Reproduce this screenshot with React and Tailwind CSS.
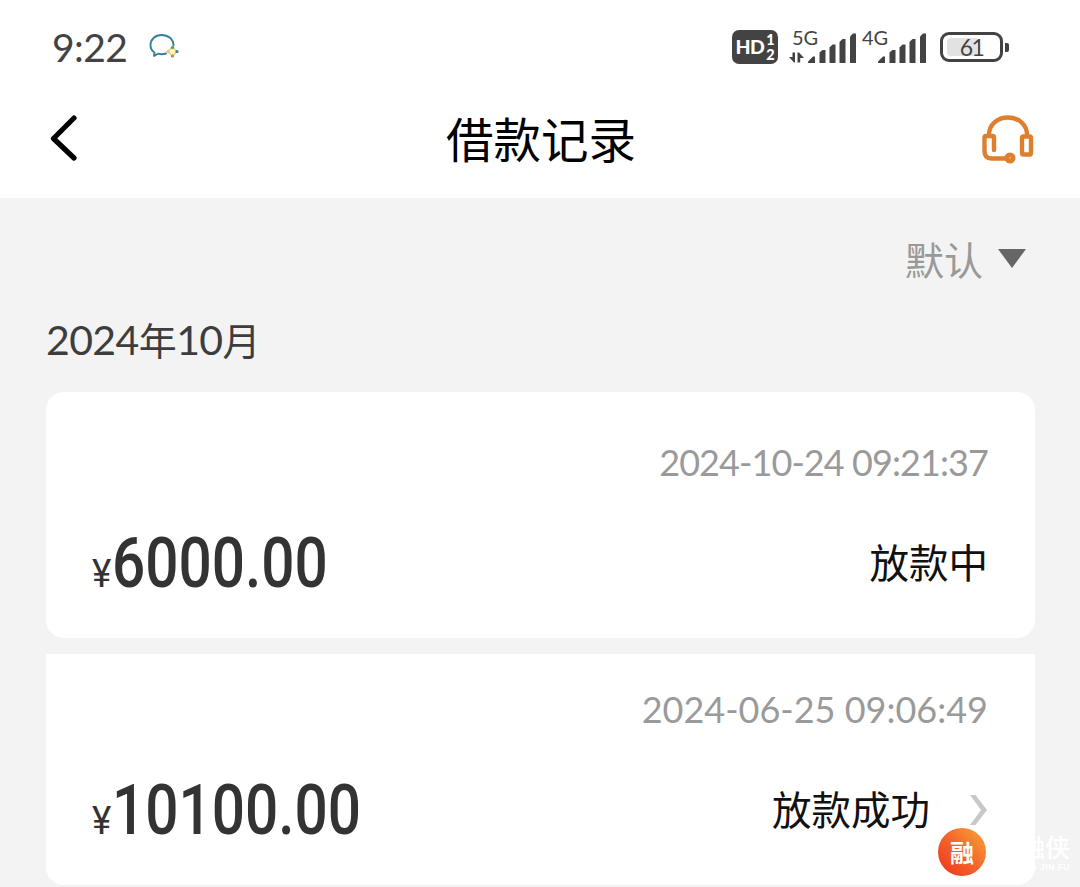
const records = [
  { id: 1, time: '2024-10-24 09:21:37', amount: '6000.00', status: '放款中', hasDetail: false },
  { id: 2, time: '2024-06-25 09:06:49', amount: '10100.00', status: '放款成功', hasDetail: true },
];

const SignalBars = ({ withArrows }) => (
  <svg width="68" height="32" viewBox="0 0 68 32" fill="#434343">
    {withArrows && <path d="M3.500 20.500H6V30.500H5L0 25h3.500zM8.500 30.500V20.500h1.500l5 5.500h-3.800v4.500z" />}
    <path d="M19 31v-1.500l5-5h2V31z" />
    <path d="M30.500 31V20.500l3-2.500h3V31z" />
    <path d="M40.500 31V15.500l3-3h3V31z" />
    <path d="M50.500 31V10l3-3h3v24z" />
    <path d="M61 31V4.500l3-3h3V31z" />
  </svg>
);

const StatusBar = () => (
  <div className="flex h-[94px] items-center justify-between pl-[52px] pr-[71px] text-[#434343]">
    <div className="flex items-center gap-[22px]">
      <span className="w-[75px] whitespace-nowrap font-['Lato'] text-[39px] leading-none tracking-[-0.6px]">9:22</span>
      <svg width="31" height="28" viewBox="0 0 31 28" fill="none" strokeLinecap="round" strokeLinejoin="round">
        <path d="M24.500 12.500C24.500 6 19 2 12.500 2 6 2 1.500 6.500 1.500 12c0 3.500 1.500 6 4 7.500L5 23l4-2.300c3 .8 5.500.6 8-.2" stroke="#37809b" strokeWidth="1.900" />
        <path d="M18.500 18.500l5-4.500 4.500 4.500-4.500 4.500z" fill="#fdf6c8" stroke="#d8d66a" strokeWidth="1.300" />
        <circle cx="23.500" cy="14.500" r="1.600" fill="#4f9a63" />
        <circle cx="28" cy="18.500" r="1.600" fill="#3c7fa8" />
        <circle cx="23.500" cy="23" r="1.600" fill="#b9824d" />
        <circle cx="19" cy="18.500" r="1.600" fill="#e6c766" />
      </svg>
    </div>
    <div className="flex items-center">
      <div className="flex h-[34px] w-[46px] items-center justify-center gap-[2px] rounded-[7px] bg-[#434343] font-['Lato'] font-black text-white">
        <span className="text-[19.5px] leading-none tracking-[-0.6px]">HD</span>
        <span className="flex flex-col text-[14.5px] leading-[15px]">
          <span>1</span>
          <span>2</span>
        </span>
      </div>
      <div className="relative ml-[11px] h-[34px] w-[70px]">
        <span className="absolute left-[3px] top-[-3px] font-['Lato'] text-[20px] leading-none">5G</span>
        <div className="absolute bottom-0 left-0">
          <SignalBars withArrows />
        </div>
      </div>
      <div className="relative h-[34px] w-[70px]">
        <span className="absolute left-[3px] top-[-3px] font-['Lato'] text-[20px] leading-none">4G</span>
        <div className="absolute bottom-0 left-0">
          <SignalBars />
        </div>
      </div>
      <div className="ml-[11px] flex items-center gap-[2px]">
        <div className="relative flex h-[30px] w-[63px] items-center justify-center rounded-[9px] border-[3px] border-[#434343] p-[3px]">
          <div className="absolute bottom-[3px] left-[4px] top-[3px] w-[30px] rounded-l-[4px] bg-[#e2e2e2]" />
          <span className="relative font-['Lato'] text-[23px] leading-none tracking-[-1.5px]">61</span>
        </div>
        <div className="h-[9px] w-[4px] rounded-r-[2px] bg-[#434343]" />
      </div>
    </div>
  </div>
);

const Header = () => (
  <header className="h-[198px] bg-white">
    <StatusBar />
    <div className="flex h-[88px] items-center justify-between pl-[50px] pr-[45px]">
      <button aria-label="返回" className="w-[54px]">
        <svg width="28" height="46" viewBox="0 0 28 46" fill="none" stroke="#000" strokeWidth="5.200" strokeLinecap="round" strokeLinejoin="round">
          <path d="M24 3L3.500 23.500 24 43" />
        </svg>
      </button>
      <h1 className="-mt-px mr-[3px] text-[47.5px] leading-none text-black">借款记录</h1>
      <button aria-label="客服">
        <svg width="54" height="52" viewBox="0 0 54 52" fill="none" stroke="#dd7f2c" strokeWidth="4.400" strokeLinecap="round" strokeLinejoin="round">
          <path d="M8 24V23C8 12 17 5.500 27 5.500S46 12 46 23v1" />
          <path d="M13 38V25.500q0-1.500-1.500-1.500H5q-1.500 0-1.500 1.500V39q0 7.500 7 7.500h14.500" />
          <rect x="41" y="24.500" width="9" height="18" rx="1.500" />
          <circle cx="29" cy="46" r="3.300" fill="#f3a95c" />
        </svg>
      </button>
    </div>
  </header>
);

const RecordCard = ({ record }) => (
  <div
    className={
      record.hasDetail
        ? 'h-[231px] rounded-b-[18px] bg-white pl-[46px] pr-[47px] pt-[33px]'
        : 'h-[246px] rounded-[18px] bg-white pl-[46px] pr-[47px] pt-[48px]'
    }
  >
    <div
      className={
        record.hasDetail
          ? "text-right font-['Lato'] text-[36px] leading-[44px] text-[#9a9a9a]"
          : "text-right font-['Lato'] text-[36px] leading-[44px] tracking-[-0.92px] text-[#9a9a9a]"
      }
    >
      {record.time}
    </div>
    <div className="mt-[46px] flex h-[66px] items-center justify-between">
      <div className="flex items-baseline font-['Roboto'] text-[#333]">
        <span className="w-[20px] origin-left scale-x-[0.94] text-[39px] leading-none">¥</span>
        <span className="origin-left scale-x-[0.836] text-[70px] font-medium leading-[66px]">{record.amount}</span>
      </div>
      <div className="flex items-center text-[#111]">
        <span className="-mt-[5px] text-[39.5px] leading-none">{record.status}</span>
        {record.hasDetail && (
          <svg className="ml-[39px]" width="19" height="30" viewBox="0 0 19 30" fill="#c8c8c8">
            <path d="M1 0H6.500L18 15 6.500 30H1L12 15z" />
          </svg>
        )}
      </div>
    </div>
  </div>
);

const Watermark = () => (
  <div className="absolute left-[938px] top-[828px] flex h-12 w-[132px] items-center justify-between">
    <div className="flex h-12 w-12 items-center justify-center rounded-full bg-linear-to-tr from-[#ee2a1c] via-[#f3652b] to-[#f8a33a] text-[24px] font-bold leading-none text-white">
      融
    </div>
    <div className="flex flex-col items-end text-white">
      <span className="text-[25px] font-medium leading-[28px]">融侠</span>
      <span className="mt-[2px] whitespace-nowrap font-['Liberation_Sans'] text-[8.5px] font-bold leading-[10px] tracking-[0.5px]">RONG JIN FU</span>
    </div>
  </div>
);

export default function App() {
  return (
    <div className="relative h-[887px] w-[1080px] overflow-hidden bg-[#f3f3f3] font-['Noto_Sans_CJK_SC',sans-serif]">
      <Header />
      <main className="px-[46px]">
        <div className="flex h-[121px] items-center justify-end gap-[15px] pr-[8px] text-[#999]">
          <span className="text-[39px] leading-none">默认</span>
          <svg width="28" height="19" viewBox="0 0 28 19" fill="#666">
            <path d="M0 0h28L14 19z" />
          </svg>
        </div>
        <h2 className="h-[73px] text-[38px] leading-[40px] tracking-[-0.6px] text-[#3d3d3d]">
          <span className="font-['Lato'] text-[41px]">2024</span>年<span className="font-['Lato'] text-[41px]">10</span>月
        </h2>
        <div className="flex w-[989px] flex-col gap-4">
          {records.map((record) => (
            <RecordCard key={record.id} record={record} />
          ))}
        </div>
      </main>
      <Watermark />
    </div>
  );
}
